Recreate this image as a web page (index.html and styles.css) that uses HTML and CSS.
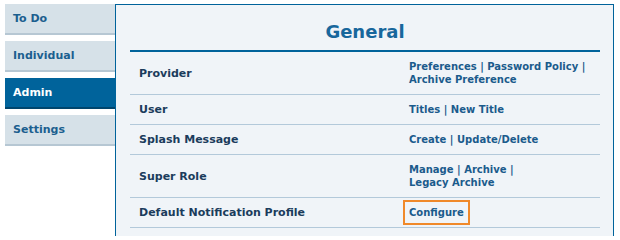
FILE: index.html
```html
<!DOCTYPE html>
<html lang="en">
<head>
<meta charset="utf-8">
<title>Admin - General</title>
<link rel="stylesheet" href="styles.css">
</head>
<body>
<div class="layout">
  <nav class="tabs">
    <a class="tab" href="#">To Do</a>
    <a class="tab" href="#">Individual</a>
    <a class="tab tab-active" href="#">Admin</a>
    <a class="tab" href="#">Settings</a>
  </nav>
  <section class="panel">
    <h1 class="panel-title">General</h1>
    <table class="settings">
      <tr>
        <td class="label">Provider</td>
        <td class="links"><a href="#">Preferences</a> | <a href="#">Password Policy</a> |<br><a href="#">Archive Preference</a></td>
      </tr>
      <tr>
        <td class="label">User</td>
        <td class="links"><a href="#">Titles</a> | <a href="#">New Title</a></td>
      </tr>
      <tr>
        <td class="label">Splash Message</td>
        <td class="links"><a href="#">Create</a> | <a href="#">Update/Delete</a></td>
      </tr>
      <tr>
        <td class="label">Super Role</td>
        <td class="links"><a href="#">Manage</a> | <a href="#">Archive</a> |<br><a href="#">Legacy Archive</a></td>
      </tr>
      <tr>
        <td class="label">Default Notification Profile</td>
        <td class="links"><a class="focused" href="#">Configure</a></td>
      </tr>
    </table>
  </section>
</div>
</body>
</html>
```
FILE: styles.css
```css
html, body {
  margin: 0;
  padding: 0;
  background: #ffffff;
  overflow: hidden;
}

body {
  font-family: "DejaVu Sans", Verdana, sans-serif;
  font-weight: bold;
}

.layout {
  display: flex;
  align-items: flex-start;
  padding: 4px 0 0 5px;
}

.tabs {
  display: flex;
  flex-direction: column;
  gap: 6px;
  width: 110px;
  flex: none;
}

.tab {
  display: block;
  height: 29px;
  line-height: 30px;
  padding-left: 8px;
  background: #d6e1e8;
  border-bottom: 2px solid #b6c7d3;
  color: #1c5f8f;
  font-size: 11px;
  text-decoration: none;
}

.tab-active {
  background: #00639b;
  border-bottom-color: #00456d;
  color: #ffffff;
}

.panel {
  width: 497px;
  height: 231px;
  flex: none;
  background: #f0f4f8;
  border: 1px solid #00639b;
  border-bottom: none;
}

.panel-title {
  margin: 0 13px 0 14px;
  padding: 16px 0 7px;
  line-height: 22px;
  font-size: 18px;
  text-align: center;
  color: #18679c;
  border-bottom: 2px solid #00639b;
}

.settings {
  width: 470px;
  margin-left: 14px;
  border-collapse: collapse;
}

.settings td {
  border-bottom: 1px solid #b3c9da;
  padding: 8px 0 8px 9px;
  vertical-align: middle;
  line-height: 13px;
}

.label {
  width: 261px;
  font-size: 11px;
  color: #1b3c5c;
}

.links {
  font-size: 10px;
  color: #1b5b8c;
}

.links a {
  color: #1b5b8c;
  text-decoration: none;
}

.links a.focused {
  display: inline-block;
  outline: 2px solid #f0892a;
  outline-offset: 4px;
}
```
